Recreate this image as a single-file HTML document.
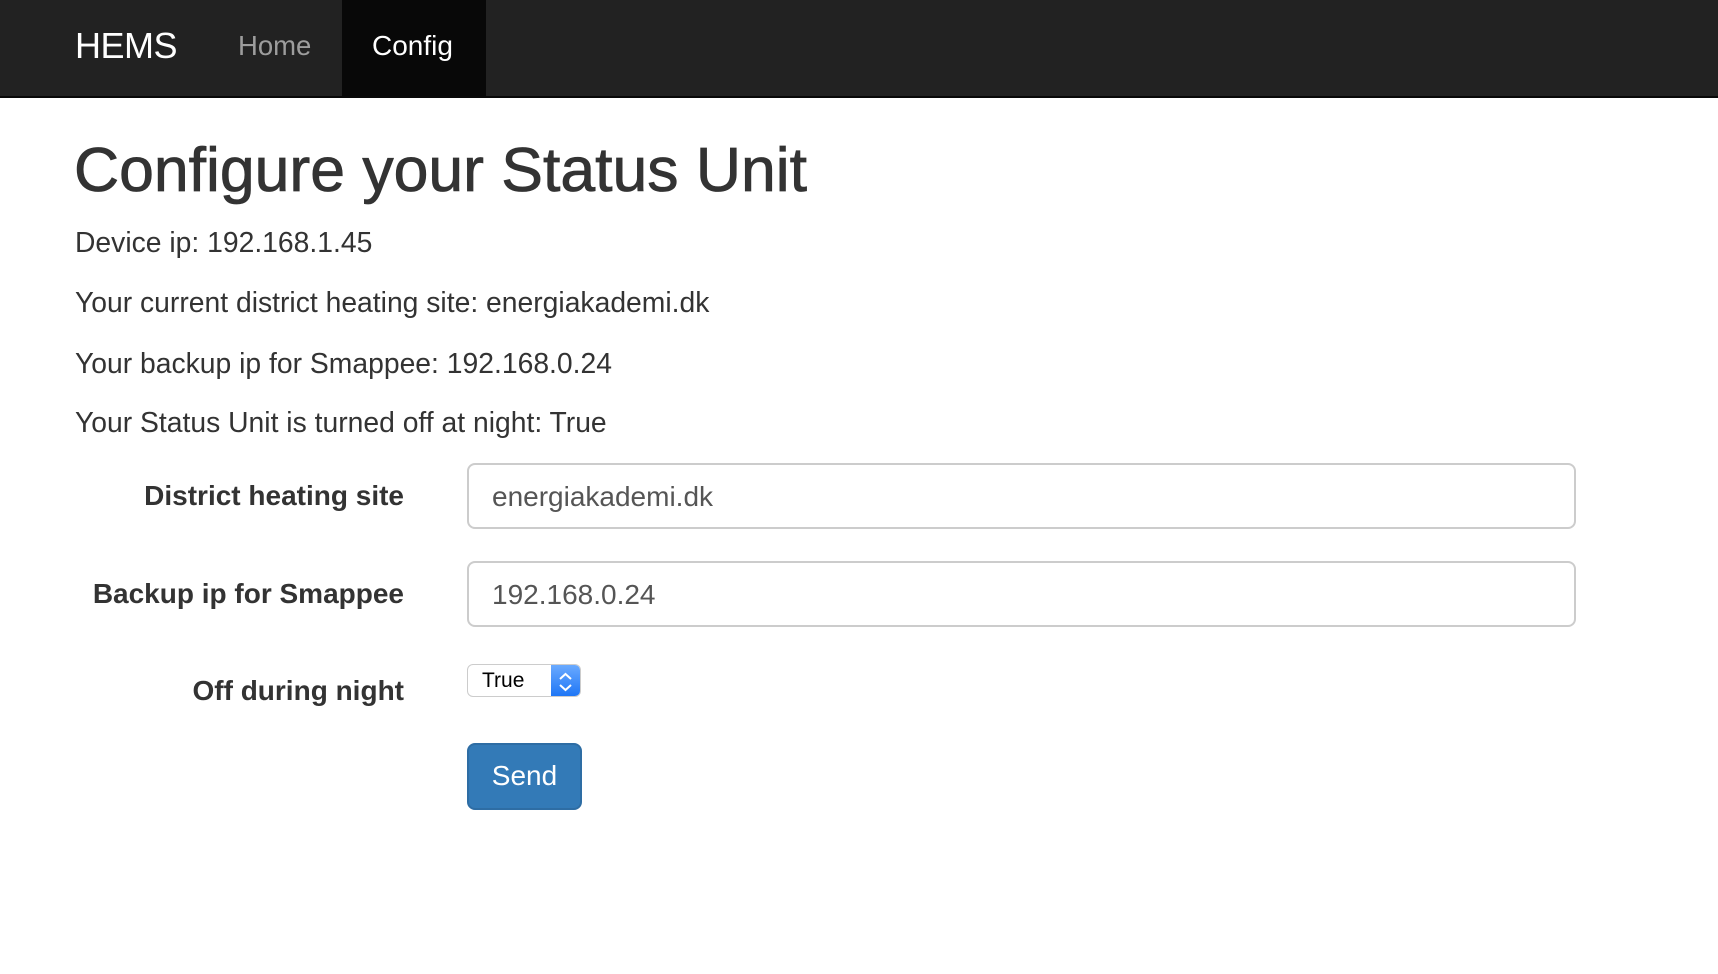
<!DOCTYPE html>
<html><head><meta charset="utf-8"><style>
*{box-sizing:border-box;margin:0;padding:0}
body{width:1718px;height:974px;background:#fff;font-family:"Liberation Sans",Arial,sans-serif;color:#333;position:relative;overflow:hidden}
.nav{position:absolute;left:0;top:0;width:1718px;height:98px;background:#222;border-bottom:2px solid #080808}
.a{position:absolute;white-space:nowrap}
.brand{left:75px;top:25px;font-size:36px;color:#fff;letter-spacing:-0.5px}
.home{left:238px;top:30px;font-size:27.5px;color:#9d9d9d}
.act{left:342px;top:0;width:144px;height:96px;background:#080808}
.cfg{left:372px;top:30px;font-size:28px;color:#fff}
h1{position:absolute;left:74px;top:134px;font-size:62.5px;font-weight:normal;color:#333;white-space:nowrap;-webkit-text-stroke:0.8px #333}
.p{left:75px;font-size:28.3px}
.lbl{right:1314px;font-size:28px;font-weight:bold;text-align:right}
.in{position:absolute;left:467px;width:1109px;height:66px;border:2px solid #ccc;border-radius:8px;font-size:28px;color:#555;padding:16px 0 0 23px}
.sel{position:absolute;left:467px;top:664px;width:114px;height:33px;border:1px solid #ccc;border-radius:6px;background:#fff;overflow:hidden;font-size:21px;color:#000;padding:4px 0 0 14px}
.sel .b{position:absolute;right:0;top:0;width:29px;height:33px;background:linear-gradient(#6aaaff,#1a73f5)}
.btn{position:absolute;left:467px;top:743px;width:115px;height:67px;background:#337ab7;border:2px solid #2e6da4;border-radius:8px;color:#fff;font-size:28px;text-align:center;line-height:62px}
</style></head><body>
<div class="nav">
<div class="a act"></div>
<div class="a brand">HEMS</div>
<div class="a home">Home</div>
<div class="a cfg">Config</div>
</div>
<h1>Configure your Status Unit</h1>
<div class="a p" style="top:226px">Device ip: 192.168.1.45</div>
<div class="a p" style="top:286px">Your current district heating site: energiakademi.dk</div>
<div class="a p" style="top:347px">Your backup ip for Smappee: 192.168.0.24</div>
<div class="a p" style="top:406px">Your Status Unit is turned off at night: True</div>
<div class="a lbl" style="top:480px">District heating site</div>
<div class="a lbl" style="top:578px">Backup ip for Smappee</div>
<div class="a lbl" style="top:675px">Off during night</div>
<div class="in" style="top:463px">energiakademi.dk</div>
<div class="in" style="top:561px">192.168.0.24</div>
<div class="sel">True<div class="b"><svg width="29" height="33" viewBox="0 0 29 33"><path d="M9 14l5.5-5 5.5 5M9 20l5.5 5 5.5-5" stroke="#fff" stroke-width="2" fill="none"/></svg></div></div>
<div class="btn">Send</div>
</body></html>
